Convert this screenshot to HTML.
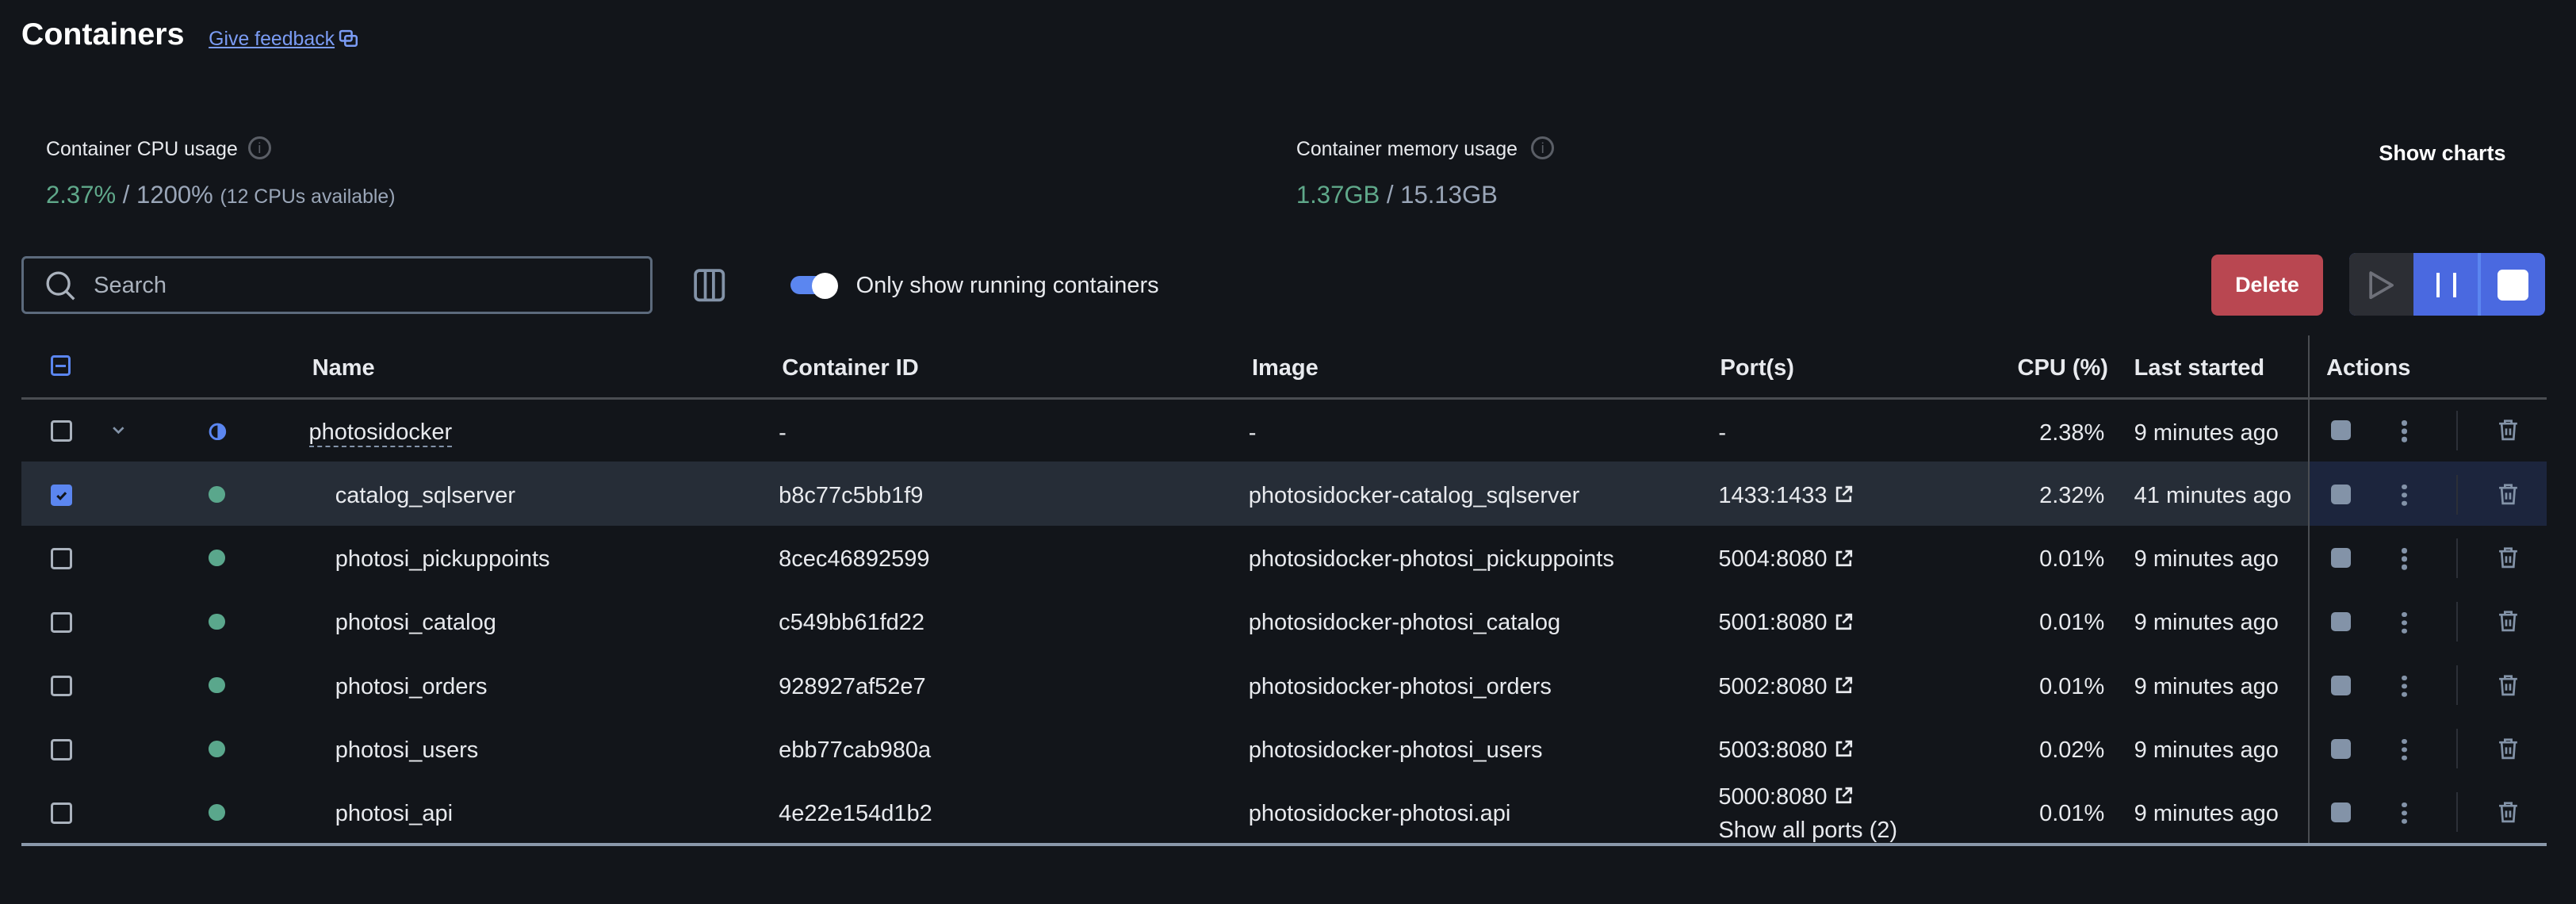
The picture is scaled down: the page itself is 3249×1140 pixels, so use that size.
<!DOCTYPE html>
<html><head><meta charset="utf-8"><style>
html,body{margin:0;padding:0;background:#12151a;overflow:hidden}
body{width:3249px;height:1140px}
#r{zoom:2.0721;width:1568px;height:550px;position:relative;font-family:"Liberation Sans",sans-serif;color:#e8eaee}
.a{position:absolute;white-space:nowrap}
.t{font-size:14px;line-height:16px}
.h{font-size:14px;font-weight:bold;line-height:16px}
.cb{position:absolute;width:10px;height:10px;border:1.5px solid #aab2bd;border-radius:2px}
.dot{position:absolute;width:10px;height:10px;border-radius:50%;background:#5aa78c}
.row{position:absolute;left:13px;width:1537px;height:39px}
.sq{position:absolute;width:12px;height:12px;border-radius:2.5px;background:#8393a8}
</style></head><body><div id="r">
<div class="a" style="left:13px;top:10px;font-size:19px;font-weight:bold;color:#fff">Containers</div>
<div class="a" style="left:127px;top:17px;font-size:12px;color:#7b9cf4;text-decoration:underline">Give feedback</div>
<svg class="a" style="left:206px;top:18px" width="12" height="12" viewBox="0 0 12 12" fill="none" stroke="#7b9cf4" stroke-width="1.2"><rect x="1" y="1" width="7" height="6" rx="1"/><rect x="4" y="4" width="7" height="6" rx="1"/></svg>

<div class="a" style="left:28px;top:84px;font-size:12px">Container CPU usage</div>
<div class="a" style="left:151px;top:83px;width:14px;height:14px;border:1.5px solid #5a5e66;border-radius:50%;box-sizing:border-box;font-size:9px;color:#5a5e66;text-align:center;line-height:12px">i</div>
<div class="a" style="left:28px;top:110px;font-size:15px"><span style="color:#5fa88a">2.37%</span><span style="color:#9aa6b8"> / 1200%</span> <span style="color:#9aa6b8;font-size:12px">(12 CPUs available)</span></div>
<div class="a" style="left:789px;top:84px;font-size:12px">Container memory usage</div>
<div class="a" style="left:932px;top:83px;width:14px;height:14px;border:1.5px solid #5a5e66;border-radius:50%;box-sizing:border-box;font-size:9px;color:#5a5e66;text-align:center;line-height:12px">i</div>
<div class="a" style="left:789px;top:110px;font-size:15px"><span style="color:#5fa88a">1.37GB</span><span style="color:#9aa6b8"> / 15.13GB</span></div>
<div class="a" style="left:1448px;top:86px;font-size:13px;font-weight:bold;color:#fff">Show charts</div>

<div class="a" style="left:13px;top:156px;width:384px;height:35px;border:1.5px solid #5c6a7c;border-radius:3px;box-sizing:border-box"></div>
<svg class="a" style="left:27px;top:164px" width="20" height="20" viewBox="0 0 20 20" fill="none" stroke="#aab2bd" stroke-width="1.6"><circle cx="8.5" cy="8.5" r="6.5"/><path d="M13.3 13.3L18 18"/></svg>
<div class="a" style="left:57px;top:166px;font-size:14px;color:#aab2bd">Search</div>
<svg class="a" style="left:422px;top:163px" width="20" height="21" viewBox="0 0 20 21" fill="none" stroke="#8393a8" stroke-width="1.8"><rect x="1.5" y="1.5" width="17" height="18" rx="2.5"/><path d="M7.5 2v17M12.5 2v17"/></svg>
<div class="a" style="left:481px;top:168px;width:22px;height:11px;border-radius:6px;background:#5b86f0"></div>
<div class="a" style="left:494px;top:166px;width:16px;height:16px;border-radius:50%;background:#fff"></div>
<div class="a" style="left:521px;top:166px;font-size:14px">Only show running containers</div>

<div class="a" style="left:1346px;top:155px;width:68px;height:37px;border-radius:4px;background:#b94751;color:#fff;font-size:13px;font-weight:bold;text-align:center;line-height:37px">Delete</div>
<div class="a" style="left:1430px;top:154px;width:119px;height:38px;border-radius:4px;background:#4a69e0;overflow:hidden">
 <div class="a" style="left:0;top:0;width:39px;height:38px;background:#2c2e34"></div>
 <svg class="a" style="left:11px;top:10px" width="18" height="19" viewBox="0 0 18 19" fill="none" stroke="#6e7079" stroke-width="1.8" stroke-linejoin="round"><path d="M2 2v15l13-7.5z"/></svg>
 <div class="a" style="left:53px;top:12px;width:2px;height:15px;background:#fff"></div>
 <div class="a" style="left:63px;top:12px;width:2px;height:15px;background:#fff"></div>
 <div class="a" style="left:78px;top:0;width:2px;height:38px;background:#5b86f0"></div>
 <div class="a" style="left:90px;top:10px;width:19px;height:19px;border-radius:3px;background:#fff"></div>
</div>

<div class="row" style="top:281px;background:#262d37"></div>
<div class="a" style="left:1405px;top:281px;width:145px;height:39px;background:#1c253d"></div>
<div class="a" style="left:1405px;top:204px;width:1px;height:310px;background:#4a4d52"></div>
<div class="a" style="left:13px;top:242px;width:1537px;height:1px;background:#4a4d52"></div>
<div class="a" style="left:13px;top:513px;width:1537px;height:2px;background:#8a98aa"></div>

<div class="a" style="left:31px;top:216px;width:9px;height:10px;border:1.5px solid #5b86f0;border-radius:2px"></div>
<div class="a" style="left:34px;top:222px;width:6px;height:1.5px;background:#5b86f0"></div>
<div class="a h" style="left:190px;top:216px">Name</div>
<div class="a h" style="left:476px;top:216px">Container ID</div>
<div class="a h" style="left:762px;top:216px">Image</div>
<div class="a h" style="left:1047px;top:216px">Port(s)</div>
<div class="a h" style="left:1228px;top:216px">CPU (%)</div>
<div class="a h" style="left:1299px;top:216px">Last started</div>
<div class="a h" style="left:1416px;top:216px">Actions</div>

<div class="cb" style="left:31px;top:256px"></div>
<svg class="a" style="left:67px;top:258px" width="10" height="8" viewBox="0 0 10 8" fill="none" stroke="#8393a8" stroke-width="1.3"><path d="M2 2l3 3 3-3"/></svg>
<svg class="a" style="left:127px;top:257px" width="11" height="11" viewBox="0 0 11 11"><circle cx="5.5" cy="5.5" r="4.5" fill="none" stroke="#5b86f0" stroke-width="1.4"/><path d="M5.5 1a4.5 4.5 0 0 1 0 9z" fill="#5b86f0"/></svg>
<div class="a t" style="left:188px;top:256px;border-bottom:1px dashed #8393a8;line-height:15px">photosidocker</div>
<div class="a t" style="left:474px;top:256px">-</div>
<div class="a t" style="left:760px;top:256px">-</div>
<div class="a t" style="left:1046px;top:256px">-</div>
<div class="a t" style="left:1238px;top:256px;width:43px;text-align:right">2.38%</div>
<div class="a t" style="left:1299px;top:256px">9 minutes ago</div>

<div class="a" style="left:31px;top:295px;width:13px;height:13px;border-radius:2px;background:#5b86f0"></div>
<svg class="a" style="left:31px;top:295px" width="13" height="13" viewBox="0 0 13 13" fill="none" stroke="#12151a" stroke-width="1.5"><path d="M4 6.8l1.8 1.8L9.2 5"/></svg>
</div>
<script>
var R=document.getElementById('r');
var data=[
["catalog_sqlserver","b8c77c5bb1f9","photosidocker-catalog_sqlserver","1433:1433","2.32%","41 minutes ago"],
["photosi_pickuppoints","8cec46892599","photosidocker-photosi_pickuppoints","5004:8080","0.01%","9 minutes ago"],
["photosi_catalog","c549bb61fd22","photosidocker-photosi_catalog","5001:8080","0.01%","9 minutes ago"],
["photosi_orders","928927af52e7","photosidocker-photosi_orders","5002:8080","0.01%","9 minutes ago"],
["photosi_users","ebb77cab980a","photosidocker-photosi_users","5003:8080","0.02%","9 minutes ago"],
["photosi_api","4e22e154d1b2","photosidocker-photosi.api","5000:8080","0.01%","9 minutes ago"]];
var ext='<svg width="12" height="12" viewBox="0 0 12 12" fill="none" stroke="#e8eaee" stroke-width="1.3" style="vertical-align:-1px;margin-left:4px"><path d="M5 2H2v8h8V7M7 1.5h3.5V5M10.5 1.5L5.5 6.5"/></svg>';
var h='';
function act(c){return '<div class="sq" style="left:1419px;top:'+(c-6)+'px"></div>'+
'<div class="a" style="left:1462px;top:'+(c-6)+'px;width:3px;height:3px;border-radius:50%;background:#8393a8;box-shadow:0 5px 0 #8393a8,0 10px 0 #8393a8"></div>'+
'<div class="a" style="left:1495px;top:'+(c-12)+'px;width:1px;height:24px;background:#2c3038"></div>'+
'<svg class="a" style="left:1520px;top:'+(c-7)+'px" width="13" height="14" viewBox="0 0 13 14" fill="none" stroke="#8393a8" stroke-width="1.3"><path d="M1 3h11M4.5 3V1.3h4V3M2.5 3l.7 9.5h6.6l.7-9.5M5.3 6v4M7.7 6v4"/></svg>';}
h+=act(262);
for(var i=0;i<6;i++){var c=301+i*38.67,d=data[i],ty=c-7;
 if(i>0)h+='<div class="cb" style="left:31px;top:'+(c-6)+'px"></div>';
 h+='<div class="dot" style="left:127px;top:'+(c-5)+'px"></div>';
 h+='<div class="a t" style="left:204px;top:'+ty+'px">'+d[0]+'</div>';
 h+='<div class="a t" style="left:474px;top:'+ty+'px">'+d[1]+'</div>';
 h+='<div class="a t" style="left:760px;top:'+ty+'px">'+d[2]+'</div>';
 if(i<5)h+='<div class="a t" style="left:1046px;top:'+ty+'px">'+d[3]+ext+'</div>';
 else h+='<div class="a t" style="left:1046px;top:'+(c-17)+'px">'+d[3]+ext+'</div><div class="a t" style="left:1046px;top:'+(c+3)+'px">Show all ports (2)</div>';
 h+='<div class="a t" style="left:1228px;top:'+ty+'px;width:53px;text-align:right">'+d[4]+'</div>';
 h+='<div class="a t" style="left:1299px;top:'+ty+'px">'+d[5]+'</div>';
 h+=act(c);}
R.insertAdjacentHTML('beforeend',h);
</script>
</body></html>
